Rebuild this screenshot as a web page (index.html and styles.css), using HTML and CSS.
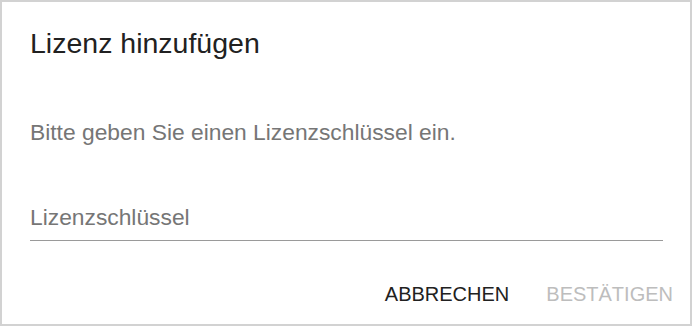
FILE: index.html
```html
<!DOCTYPE html>
<html lang="de">
<head>
<meta charset="utf-8">
<title>Lizenz hinzufügen</title>
<link rel="stylesheet" href="styles.css">
</head>
<body>
<div class="dialog">
  <h2 class="dialog-title">Lizenz hinzufügen</h2>
  <div class="dialog-content">
    <p class="dialog-text">Bitte geben Sie einen Lizenzschlüssel ein.</p>
    <div class="field">
      <label class="field-label">Lizenzschlüssel</label>
      <div class="field-line"></div>
    </div>
  </div>
  <div class="dialog-actions">
    <button class="btn">ABBRECHEN</button>
    <button class="btn btn-disabled" disabled>BESTÄTIGEN</button>
  </div>
</div>
</body>
</html>
```
FILE: styles.css
```css
html, body {
  margin: 0;
  padding: 0;
  background: #ffffff;
}
body {
  font-family: "Liberation Sans", Arial, sans-serif;
}
.dialog {
  box-sizing: border-box;
  width: 692px;
  height: 326px;
  border: 2px solid #d2d2d2;
  background: #ffffff;
  display: flex;
  flex-direction: column;
}
.dialog-title {
  margin: 25px 0 0 28px;
  font-size: 28.5px;
  line-height: 33.6px;
  font-weight: 400;
  color: #212121;
}
.dialog-content {
  padding: 0 27px 0 28px;
}
.dialog-text {
  margin: 55px 0 0 0;
  font-size: 22.8px;
  line-height: 33.6px;
  color: #767676;
}
.field {
  margin-top: 52px;
}
.field-label {
  display: block;
  font-size: 22.8px;
  line-height: 33.6px;
  color: #767676;
}
.field-line {
  margin-top: 5px;
  height: 1px;
  background: #9a9a9a;
}
.dialog-actions {
  display: flex;
  justify-content: flex-end;
  gap: 37px;
  margin-top: 41px;
  padding-right: 17px;
}
.btn {
  border: 0;
  background: transparent;
  padding: 0;
  font-family: "Liberation Sans", Arial, sans-serif;
  font-size: 20px;
  line-height: 24px;
  color: #212121;
  cursor: pointer;
}
.btn-disabled {
  color: #bdbdbd;
  cursor: default;
}
```
